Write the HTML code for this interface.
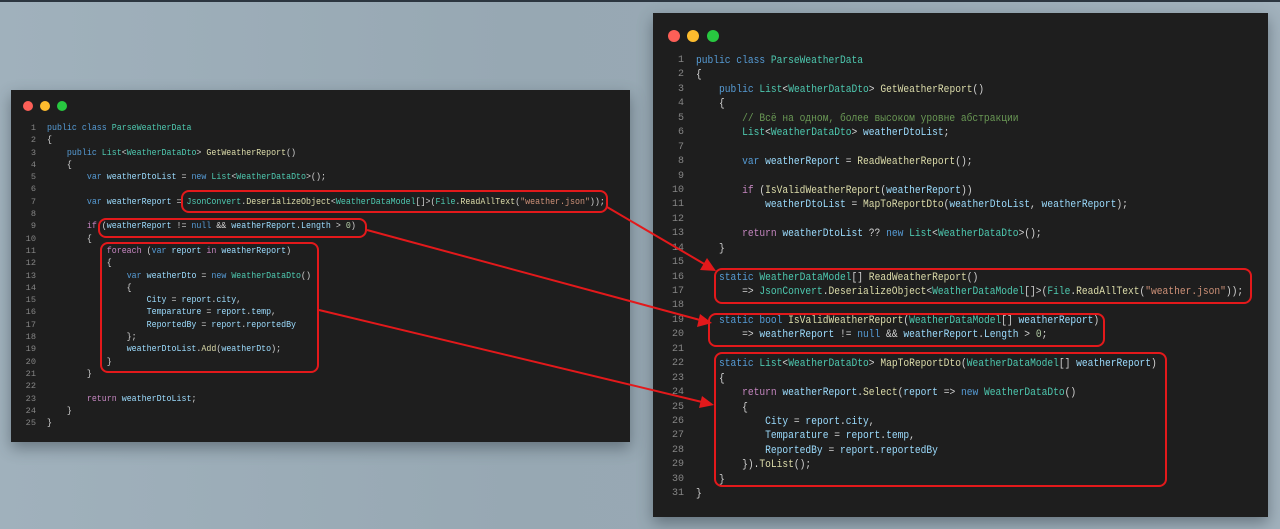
<!DOCTYPE html>
<html><head><meta charset="utf-8"><style>
*{margin:0;padding:0;box-sizing:border-box}
html,body{width:1280px;height:529px;overflow:hidden}
body{background:linear-gradient(90deg,#a0b1bc 0%,#97a8b3 40%,#98a9b4 60%,#a2b2bd 100%);position:relative;font-family:"Liberation Mono","DejaVu Sans Mono",monospace}
.top{position:absolute;left:0;top:0;width:1280px;height:2px;background:#2c3640}
.panel{position:absolute;background:#1e1e1e;box-shadow:0 6px 14px rgba(40,50,60,.45)}
.dot{position:absolute;border-radius:50%}
.ln{position:absolute;white-space:pre;color:#d4d4d4;transform-origin:0 0}
.n{position:absolute;white-space:pre;color:#858585;text-align:right}
.k{color:#569cd6}.t{color:#4ec9b0}.m{color:#dcdcaa}.v{color:#9cdcfe}.c{color:#c586c0}.s{color:#ce9178}.g{color:#6a9955}.u{color:#b5cea8}
.box{position:absolute;border:2px solid #e3191b;border-radius:8px}
</style></head><body>
<div class="top"></div>

<div class="panel" style="left:11px;top:90px;width:619px;height:352px"></div>
<div class="dot" style="left:23px;top:101px;width:10px;height:10px;background:#fc5f57"></div>
<div class="dot" style="left:40px;top:101px;width:10px;height:10px;background:#fdbc2e"></div>
<div class="dot" style="left:57px;top:101px;width:10px;height:10px;background:#28c840"></div>

<div style="position:absolute;left:0;top:122px;font-size:9.6px;line-height:12.3px">
<div class="n" style="left:14px;width:22px;top:0;font-size:8.6px">1
2
3
4
5
6
7
8
9
10
11
12
13
14
15
16
17
18
19
20
21
22
23
24
25</div>
<div class="ln" style="left:47px;top:0;transform:scaleX(0.865)"><span class="k">public class</span> <span class="t">ParseWeatherData</span>
{
    <span class="k">public</span> <span class="t">List</span>&lt;<span class="t">WeatherDataDto</span>&gt; <span class="m">GetWeatherReport</span>()
    {
        <span class="k">var</span> <span class="v">weatherDtoList</span> = <span class="k">new</span> <span class="t">List</span>&lt;<span class="t">WeatherDataDto</span>&gt;();

        <span class="k">var</span> <span class="v">weatherReport</span> = <span class="t">JsonConvert</span>.<span class="m">DeserializeObject</span>&lt;<span class="t">WeatherDataModel</span>[]&gt;(<span class="t">File</span>.<span class="m">ReadAllText</span>(<span class="s">"weather.json"</span>));

        <span class="c">if</span> (<span class="v">weatherReport</span> != <span class="k">null</span> &amp;&amp; <span class="v">weatherReport</span>.<span class="v">Length</span> &gt; <span class="u">0</span>)
        {
            <span class="c">foreach</span> (<span class="k">var</span> <span class="v">report</span> <span class="c">in</span> <span class="v">weatherReport</span>)
            {
                <span class="k">var</span> <span class="v">weatherDto</span> = <span class="k">new</span> <span class="t">WeatherDataDto</span>()
                {
                    <span class="v">City</span> = <span class="v">report</span>.<span class="v">city</span>,
                    <span class="v">Temparature</span> = <span class="v">report</span>.<span class="v">temp</span>,
                    <span class="v">ReportedBy</span> = <span class="v">report</span>.<span class="v">reportedBy</span>
                };
                <span class="v">weatherDtoList</span>.<span class="m">Add</span>(<span class="v">weatherDto</span>);
            }
        }

        <span class="c">return</span> <span class="v">weatherDtoList</span>;
    }
}</div>
</div>

<div class="panel" style="left:653px;top:13px;width:615px;height:504px"></div>
<div class="dot" style="left:668px;top:30px;width:12px;height:12px;background:#fc5f57"></div>
<div class="dot" style="left:687px;top:30px;width:12px;height:12px;background:#fdbc2e"></div>
<div class="dot" style="left:707px;top:30px;width:12px;height:12px;background:#28c840"></div>

<div style="position:absolute;left:0;top:54px;font-size:11.1px;line-height:14.43px">
<div class="n" style="left:658px;width:26px;top:0;font-size:10px">1
2
3
4
5
6
7
8
9
10
11
12
13
14
15
16
17
18
19
20
21
22
23
24
25
26
27
28
29
30
31</div>
<div class="ln" style="left:696px;top:0;transform:scaleX(0.865)"><span class="k">public class</span> <span class="t">ParseWeatherData</span>
{
    <span class="k">public</span> <span class="t">List</span>&lt;<span class="t">WeatherDataDto</span>&gt; <span class="m">GetWeatherReport</span>()
    {
        <span class="g">// Всё на одном, более высоком уровне абстракции</span>
        <span class="t">List</span>&lt;<span class="t">WeatherDataDto</span>&gt; <span class="v">weatherDtoList</span>;

        <span class="k">var</span> <span class="v">weatherReport</span> = <span class="m">ReadWeatherReport</span>();

        <span class="c">if</span> (<span class="m">IsValidWeatherReport</span>(<span class="v">weatherReport</span>))
            <span class="v">weatherDtoList</span> = <span class="m">MapToReportDto</span>(<span class="v">weatherDtoList</span>, <span class="v">weatherReport</span>);

        <span class="c">return</span> <span class="v">weatherDtoList</span> ?? <span class="k">new</span> <span class="t">List</span>&lt;<span class="t">WeatherDataDto</span>&gt;();
    }

    <span class="k">static</span> <span class="t">WeatherDataModel</span>[] <span class="m">ReadWeatherReport</span>()
        =&gt; <span class="t">JsonConvert</span>.<span class="m">DeserializeObject</span>&lt;<span class="t">WeatherDataModel</span>[]&gt;(<span class="t">File</span>.<span class="m">ReadAllText</span>(<span class="s">"weather.json"</span>));

    <span class="k">static bool</span> <span class="m">IsValidWeatherReport</span>(<span class="t">WeatherDataModel</span>[] <span class="v">weatherReport</span>)
        =&gt; <span class="v">weatherReport</span> != <span class="k">null</span> &amp;&amp; <span class="v">weatherReport</span>.<span class="v">Length</span> &gt; <span class="u">0</span>;

    <span class="k">static</span> <span class="t">List</span>&lt;<span class="t">WeatherDataDto</span>&gt; <span class="m">MapToReportDto</span>(<span class="t">WeatherDataModel</span>[] <span class="v">weatherReport</span>)
    {
        <span class="c">return</span> <span class="v">weatherReport</span>.<span class="m">Select</span>(<span class="v">report</span> =&gt; <span class="k">new</span> <span class="t">WeatherDataDto</span>()
        {
            <span class="v">City</span> = <span class="v">report</span>.<span class="v">city</span>,
            <span class="v">Temparature</span> = <span class="v">report</span>.<span class="v">temp</span>,
            <span class="v">ReportedBy</span> = <span class="v">report</span>.<span class="v">reportedBy</span>
        }).<span class="m">ToList</span>();
    }
}</div>
</div>

<div class="box" style="left:181px;top:190px;width:427px;height:23px"></div>
<div class="box" style="left:98px;top:218px;width:269px;height:20px"></div>
<div class="box" style="left:100px;top:242px;width:219px;height:131px"></div>
<div class="box" style="left:714px;top:268px;width:538px;height:36px"></div>
<div class="box" style="left:708px;top:313px;width:397px;height:34px"></div>
<div class="box" style="left:714px;top:352px;width:453px;height:135px"></div>

<svg style="position:absolute;left:0;top:0" width="1280" height="529">
<g stroke="#e3191b" stroke-width="2" fill="none">
<line x1="607" y1="207" x2="706" y2="265"/>
<line x1="367" y1="230" x2="700" y2="320"/>
<line x1="319" y1="310" x2="702" y2="402"/>
</g>
<g fill="#e3191b">
<polygon points="716,271 700,270 707,258"/>
<polygon points="712,323 697,327 700,314"/>
<polygon points="714,405 699,408 702,396"/>
</g>
</svg>
</body></html>
